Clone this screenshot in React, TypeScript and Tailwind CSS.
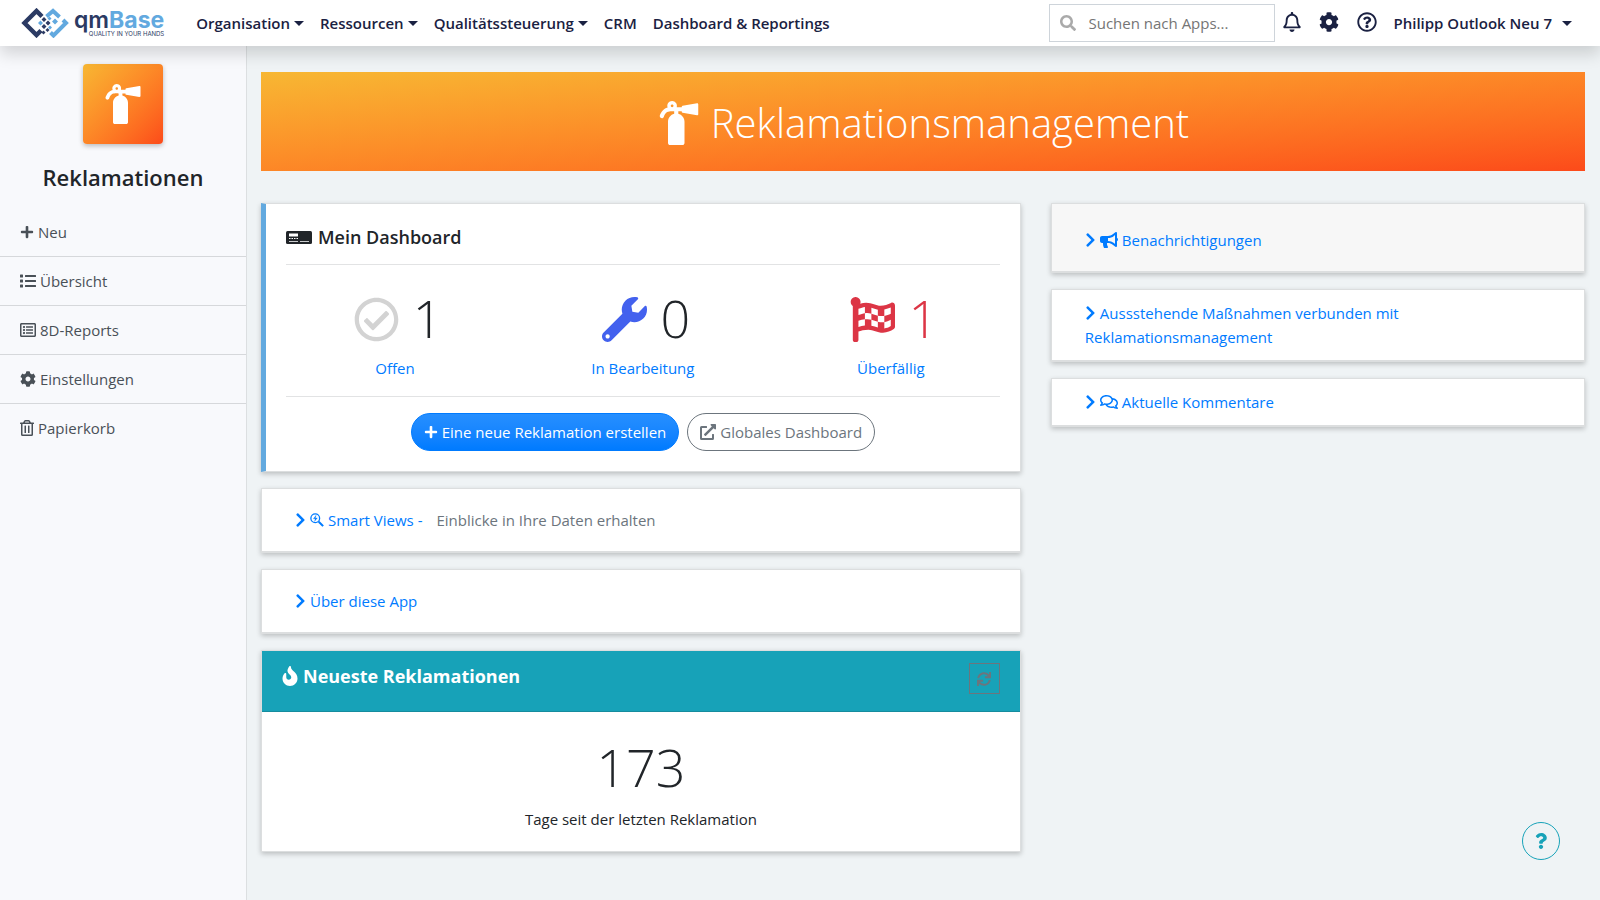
import type { ComponentType, ReactNode } from "react";
import {
	FaBullhorn,
	FaChevronRight,
	FaCog,
	FaExternalLinkAlt,
	FaFire,
	FaFireExtinguisher,
	FaFlagCheckered,
	FaList,
	FaPlus,
	FaQuestion,
	FaRegBell,
	FaRegCheckCircle,
	FaRegComments,
	FaRegListAlt,
	FaRegQuestionCircle,
	FaRegTrashAlt,
	FaSearch,
	FaSync,
	FaWrench,
} from "react-icons/fa";

type Icon = ComponentType<{ className?: string }>;

const navItems = [
	{ name: "Organisation", menu: true },
	{ name: "Ressourcen", menu: true },
	{ name: "Qualitätssteuerung", menu: true },
	{ name: "CRM", menu: false },
	{ name: "Dashboard & Reportings", menu: false },
];

const sideItems: { name: string; icon: Icon; size: string }[] = [
	{ name: "Neu", icon: FaPlus, size: "size-[14px]" },
	{ name: "Übersicht", icon: FaList, size: "size-4" },
	{ name: "8D-Reports", icon: FaRegListAlt, size: "size-4" },
	{ name: "Einstellungen", icon: FaCog, size: "size-4" },
	{ name: "Papierkorb", icon: FaRegTrashAlt, size: "h-4 w-[14px]" },
];

const stats: { name: string; value: number; icon: Icon; iconColor: string; valueColor: string }[] = [
	{ name: "Offen", value: 1, icon: FaRegCheckCircle, iconColor: "text-[#d3d3d3]", valueColor: "text-[#212529]" },
	{ name: "In Bearbeitung", value: 0, icon: FaWrench, iconColor: "text-[#4361ee]", valueColor: "text-[#212529]" },
	{ name: "Überfällig", value: 1, icon: FaFlagCheckered, iconColor: "text-[#dc3545]", valueColor: "text-[#dc3545]" },
];

const Caret = () => (
	<svg viewBox="0 0 10 5" className="h-[5px] w-[10px] shrink-0" fill="currentColor" aria-hidden="true">
		<path d="M0 0h10L5 5z" />
	</svg>
);

const Logo = () => (
	<a href="#" className="flex items-center gap-[5px]">
		<svg viewBox="0 0 48 30" className="h-[30px] w-12" fill="none" aria-hidden="true">
			<path d="M21 8.500 15.500 3 3.500 15l12 12 4.500-4.500" stroke="#2b3a63" strokeWidth="4.500" />
			<path d="M25.500 8.500 32 3l6.500 6M42 12l3 3-12.500 12.500-3-3" stroke="#62a9df" strokeWidth="4" />
			<path
				d="m23 9 2.500 2.500L23 14l-2.500-2.500zM27 12.500l2.500 2.500-2.500 2.500-2.500-2.500zM23 16l2.500 2.500L23 21l-2.500-2.500zM26.500 20l2 2-2 2-2-2zM22.500 22.500l2 2-2 2-2-2z"
				fill="#2b3a63"
			/>
			<path
				d="m19.500 12.500 2.500 2.500-2.500 2.500L17 15zM34 10.500l3 3-3 3-3-3zM29 17.500l2 2-2 2-2-2zM28.500 8.500l2 2-2 2-2-2z"
				fill="#62a9df"
			/>
		</svg>
		<span className="flex flex-col items-end font-[Inter,sans-serif]">
			<span className="flex text-[23px] leading-[21px]">
				<span className="font-semibold text-[#2b3a63]">qm</span>
				<span className="font-bold text-[#62a9df]">Base</span>
			</span>
			<span className="text-[6px] leading-[6px] font-normal text-[#2b3a63]">QUALITY IN YOUR HANDS</span>
		</span>
	</a>
);

const DashboardIcon = () => (
	<svg viewBox="0 0 26 13" className="h-[13px] w-[26px]" aria-hidden="true">
		<rect width="26" height="13" rx="1.500" fill="#212529" />
		<path d="M3 2.500h9v3H3z" fill="#fff" />
		<path d="M3 7.500h9.500" stroke="#fff" strokeDasharray="1.500 1" />
		<path d="M3 10.500h9M14 10.500h9" stroke="#c8cacc" />
	</svg>
);

const SmartSearchIcon = () => (
	<svg viewBox="0 0 16 16" className="size-[14px]" fill="none" stroke="currentColor" aria-hidden="true">
		<circle cx="6" cy="6" r="5" strokeWidth="1.5" />
		<path d="m10 10 5 5" strokeWidth="2.4" />
		<path d="M7 2.5 3.8 6.6H6L5.2 9.6l3.2-4H6.2z" fill="currentColor" strokeWidth="0.3" />
	</svg>
);

const Card = ({ className = "", children }: { className?: string; children: ReactNode }) => (
	<section className={`border border-[#dcdedf] shadow-[0_2px_5px_rgba(0,0,0,0.22)] ${className}`}>
		{children}
	</section>
);

const Header = () => (
	<header className="relative z-10 flex h-[46px] items-center bg-white pl-[21px] pr-7 font-semibold text-[#1a2142] shadow-[0_8px_16px_rgba(0,0,0,0.15)]">
		<Logo />
		<nav className="ml-8 flex items-center gap-4">
			{navItems.map((item) => (
				<a key={item.name} href="#" className="flex items-center gap-1">
					{item.name}
					{item.menu && <Caret />}
				</a>
			))}
		</nav>
		<div className="ml-auto flex items-center">
			<label className="flex h-[38px] w-[226px] items-center gap-3 border border-[#ced4da] px-[10px]">
				<FaSearch className="size-4 shrink-0 text-[#aaaaaa]" />
				<input
					type="search"
					aria-label="Suchen nach Apps"
					placeholder="Suchen nach Apps..."
					className="w-full min-w-0 font-normal outline-none placeholder:text-[#757575]"
				/>
			</label>
			<div className="ml-2 flex items-center gap-[18px] pb-[2px]">
				<button type="button" aria-label="Meldungen">
					<FaRegBell className="h-5 w-[18px]" />
				</button>
				<button type="button" aria-label="Einstellungen">
					<FaCog className="size-5" />
				</button>
				<button type="button" aria-label="Hilfe">
					<FaRegQuestionCircle className="size-5" />
				</button>
			</div>
			<button type="button" className="ml-4 flex items-center gap-2.5">
				Philipp Outlook Neu 7
				<Caret />
			</button>
		</div>
	</header>
);

const Sidebar = () => (
	<aside className="w-[247px] shrink-0 border-r border-[#dcdfe1] bg-[#f8f9fc] pt-[18px]">
		<div className="mx-auto flex size-20 items-center justify-center rounded bg-linear-to-br from-[#f7b733] to-[#fc4a1a] text-white shadow-[0_2px_5px_rgba(0,0,0,0.25)]">
			<FaFireExtinguisher className="size-10" />
		</div>
		<h2 className="mt-4 mb-[13px] text-center text-[22px] leading-[35px] font-semibold">Reklamationen</h2>
		<ul className="divide-y divide-[#d6d8db]">
			{sideItems.map(({ name, icon: Icon, size }) => (
				<li key={name}>
					<a href="#" className="flex h-12 items-center gap-1 px-5 text-[#495057]">
						<Icon className={size} />
						{name}
					</a>
				</li>
			))}
		</ul>
	</aside>
);

const Dashboard = () => (
	<Card className="border-l-[5px] border-l-[#62a9df] bg-white px-5 py-5">
		<h5 className="flex items-center gap-[6px] border-b border-[#e2e3e4] pb-[14px] text-[18px] leading-[26px] font-semibold">
			<DashboardIcon />
			Mein Dashboard
		</h5>
		<div className="border-b border-[#e2e3e4] pt-4 pb-4">
			<div className="-mx-[15px] grid grid-cols-3 text-center">
				{stats.map(({ name, value, icon: Icon, iconColor, valueColor }) => (
					<div key={name}>
						<div className="flex h-[75px] items-center justify-center gap-[14px] pt-[2px] pl-[6px]">
							<Icon className={`size-[45px] ${iconColor}`} />
							<span className={`pb-1 text-[52px] leading-[68px] font-light ${valueColor}`}>{value}</span>
						</div>
						<a href="#" className="text-[#007bff]">
							{name}
						</a>
					</div>
				))}
			</div>
		</div>
		<div className="flex justify-center gap-2 pt-4">
			<button
				type="button"
				className="flex h-[38px] items-center gap-1 rounded-full border border-[#007bff] bg-linear-to-b from-[#268fff] to-[#007bff] px-3 text-white"
			>
				<FaPlus className="size-[14px]" />
				Eine neue Reklamation erstellen
			</button>
			<button
				type="button"
				className="flex h-[38px] items-center gap-1 rounded-full border border-[#6c757d] px-3 text-[#6c757d]"
			>
				<FaExternalLinkAlt className="size-4" />
				Globales Dashboard
			</button>
		</div>
	</Card>
);

const Latest = () => (
	<Card className="bg-white">
		<div className="flex items-start justify-between border-b border-[#158c9e] bg-[#17a2b8] px-5 pt-3 pb-[17px] text-white">
			<h5 className="flex items-center gap-[5px] text-[18px] leading-[26px] font-bold">
				<FaFire className="h-5 w-4" />
				Neueste Reklamationen
			</h5>
			<button
				type="button"
				aria-label="Aktualisieren"
				className="flex size-[31px] items-center justify-center border border-[#6c757d] text-[#6c757d]"
			>
				<FaSync className="size-[14px]" />
			</button>
		</div>
		<div className="pt-[19px] pb-5 text-center">
			<p className="text-[52px] leading-[72px] font-light">173</p>
			<p className="mt-1">Tage seit der letzten Reklamation</p>
		</div>
	</Card>
);

export default function App() {
	return (
		<div className="flex min-h-screen flex-col bg-[#eff3f5] font-['Open_Sans','Noto_Sans',sans-serif] text-[15px] leading-6 text-[#212529]">
			<Header />
			<div className="flex flex-1">
				<Sidebar />
				<main className="min-w-0 flex-1 pt-[26px] pr-[15px] pb-12 pl-[14px]">
					<h1 className="flex h-[99px] items-center justify-center gap-[10px] bg-linear-to-br from-[#f7b733] to-[#fc4a1a] pt-[3px] text-[40px] font-light text-white">
						<FaFireExtinguisher className="size-11" />
						Reklamationsmanagement
					</h1>
					<div className="mt-8 grid grid-cols-12 items-start gap-[30px]">
						<div className="col-span-7 flex flex-col gap-4">
							<Dashboard />
							<Card className="border-b-2 bg-white px-[33px] py-[19px]">
								<a href="#" className="flex items-center gap-1 text-[#007bff]">
									<FaChevronRight className="h-4 w-[11px]" />
									<SmartSearchIcon />
									Smart Views -<span className="ml-2.5 text-[#6c757d]">Einblicke in Ihre Daten erhalten</span>
								</a>
							</Card>
							<Card className="border-b-2 bg-white px-[33px] py-[19px]">
								<a href="#" className="flex items-center gap-1 text-[#007bff]">
									<FaChevronRight className="h-4 w-[11px]" />
									Über diese App
								</a>
							</Card>
							<Latest />
						</div>
						<div className="col-span-5 flex flex-col gap-4 text-[#007bff]">
							<Card className="border-b-2 bg-[#f7f7f7] px-[33px] pt-6 pb-[19px]">
								<a href="#" className="flex items-center gap-1">
									<FaChevronRight className="h-4 w-[11px]" />
									<FaBullhorn className="h-4 w-[18px]" />
									Benachrichtigungen
								</a>
							</Card>
							<Card className="border-b-2 bg-white px-[33px] py-[11px]">
								<a href="#" className="block max-w-80">
									<FaChevronRight className="mr-1 inline h-4 w-[11px] align-[-2px]" />
									Aussstehende Maßnahmen verbunden mit Reklamationsmanagement
								</a>
							</Card>
							<Card className="border-b-2 bg-white px-[33px] py-[11px]">
								<a href="#" className="flex items-center gap-1">
									<FaChevronRight className="h-4 w-[11px]" />
									<FaRegComments className="h-4 w-[18px]" />
									Aktuelle Kommentare
								</a>
							</Card>
						</div>
					</div>
				</main>
			</div>
			<button
				type="button"
				aria-label="Support"
				className="fixed right-10 bottom-10 flex size-[38px] items-center justify-center rounded-full border border-[#17a2b8] text-[#17a2b8]"
			>
				<FaQuestion className="size-4" />
			</button>
		</div>
	);
}
